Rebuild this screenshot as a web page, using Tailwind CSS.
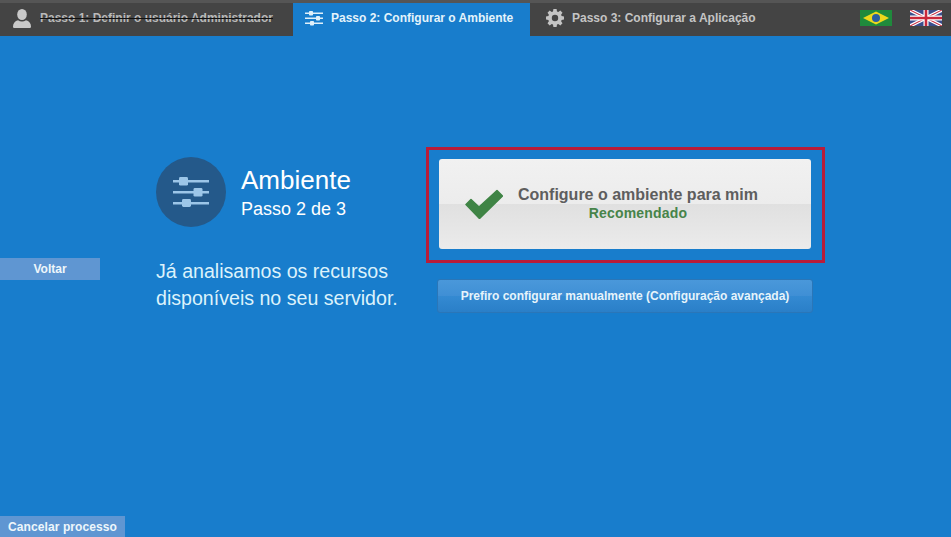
<!DOCTYPE html>
<html lang="pt-BR">
<head>
    <meta charset="UTF-8">
    <meta name="viewport" content="width=device-width, initial-scale=1.0">
    <title>Configurar o Ambiente</title>
    <script src="https://cdn.jsdelivr.net/npm/@tailwindcss/browser@4"></script>
</head>
<body class="bg-[#187dcc] font-['Liberation_Sans',Arial,sans-serif] overflow-hidden">
    <div class="flex flex-col w-[951px] h-[537px]">
        <!-- barra de passos -->
        <header class="flex h-9 shrink-0 bg-[#444444] border-t-[3px] border-[#555555]">
            <div class="flex items-center w-[293px] pl-[13px] pb-[3px] gap-[9px] text-xs font-bold text-[#b9b9b9]">
                <svg class="w-[18px] h-[19px]" viewBox="0 0 18 19" fill="#c9c9c9"><ellipse cx="9" cy="5.5" rx="4.8" ry="5.5"/><path d="M1 19c-.8 0-1-.6-1-1.4 0-3.6 2-5.6 5-6.4 2.4 1.6 5.6 1.6 8 0 3 .8 5 2.8 5 6.4 0 .8-.2 1.4-1 1.4z"/></svg>
                <span class="line-through decoration-[#111]">Passo 1: Definir o usuário Administrador</span>
            </div>
            <div class="flex items-center w-[237px] pl-[12px] pb-[3px] gap-[8px] bg-[#187dcc] text-xs font-bold text-[#e3f3fb]">
                <svg class="w-[18px] h-[15px]" viewBox="0 0 18 15" fill="#dff0fa"><path d="M0 1.5h18v1.6H0zM0 6.5h18v1.6H0zM0 11.5h18v1.6H0z"/><rect x="4" y="0" width="4" height="4.6" rx=".8"/><rect x="11" y="5" width="4" height="4.6" rx=".8"/><rect x="5" y="10" width="4" height="4.6" rx=".8"/></svg>
                <span>Passo 2: Configurar o Ambiente</span>
            </div>
            <div class="flex items-center flex-1 pl-[16px] pb-[3px] gap-[8px] text-xs font-bold text-[#c4c4c4]">
                <svg class="w-[18px] h-[18px]" viewBox="0 0 18 18" fill="#c4c4c4"><path fill-rule="evenodd" d="M7.4 0h3.2l.4 2.4 1.3.5 2-1.4 2.2 2.2-1.4 2 .5 1.3 2.4.4v3.2l-2.4.4-.5 1.3 1.4 2-2.2 2.2-2-1.4-1.3.5-.4 2.4H7.4L7 15.6l-1.3-.5-2 1.4-2.2-2.2 1.4-2-.5-1.3L0 10.6V7.4L2.4 7l.5-1.3-1.4-2 2.2-2.2 2 1.4L7 2.4zM9 5.8a3.2 3.2 0 1 0 0 6.4 3.2 3.2 0 0 0 0-6.4z"/></svg>
                <span>Passo 3: Configurar a Aplicação</span>
                <div class="flex items-center gap-[18px] ml-auto pr-[9px]">
                    <svg class="w-[32px] h-4" viewBox="0 0 32 16"><rect width="32" height="16" fill="#1f8a3c"/><path d="M16 1.5 29 8 16 14.5 3 8z" fill="#ecd81c"/><circle cx="16" cy="8" r="4" fill="#2a5da0"/></svg>
                    <svg class="w-[32px] h-4" viewBox="0 0 32 16"><rect width="32" height="16" fill="#3a4d8c"/><path d="M0 0 32 16M32 0 0 16" stroke="#fff" stroke-width="3.4"/><path d="M0 0 32 16M32 0 0 16" stroke="#c8283c" stroke-width="1.1"/><path d="M16 0v16M0 8h32" stroke="#fff" stroke-width="5"/><path d="M16 0v16M0 8h32" stroke="#c8283c" stroke-width="2.6"/></svg>
                </div>
            </div>
        </header>

        <main class="flex flex-1">
            <!-- coluna de acoes -->
            <div class="flex flex-col items-start w-[156px] pt-[222px]">
                <button class="w-[100px] h-[22px] bg-[#5f96d2] text-xs font-bold text-[#eef6fb]">Voltar</button>
                <button class="mt-auto w-[125px] h-[21px] bg-[#5f96d2] text-xs font-bold tracking-[.1px] text-[#eef6fb] pt-[1px]">Cancelar processo</button>
            </div>

            <section class="w-[270px] pt-[121px]">
                <div class="flex items-center gap-[15px]">
                    <div class="flex items-center justify-center w-[70px] h-[70px] rounded-full bg-[#24598a]">
                        <svg class="w-9 h-[30px]" viewBox="0 0 36 30" fill="#9cc6e8"><path d="M0 3h36v2.4H0zM0 14h36v2.4H0zM0 25h36v2.4H0z"/><rect x="6" y="0" width="9" height="8.6" rx="1.4"/><rect x="20.500" y="11" width="9" height="8.6" rx="1.4"/><rect x="9" y="22" width="9" height="8" rx="1.4"/></svg>
                    </div>
                    <div class="text-white pt-[3px]">
                        <h1 class="text-[26px] leading-[30px]">Ambiente</h1>
                        <p class="text-lg leading-[28px]">Passo 2 de 3</p>
                    </div>
                </div>
                <p class="mt-[31px] text-[19.6px] leading-[27px] text-[#dcf2fb]">Já analisamos os recursos<br>disponíveis no seu servidor.</p>
            </section>

            <section class="w-[399px] pt-[111px]">
                <div class="h-[116px] border-[3px] border-[#b91c3a] pl-[10px] pt-[9px]">
                    <button class="flex items-center w-[372px] h-[90px] rounded-[3px] bg-[linear-gradient(#f1f1f1_0%,#ececec_50%,#e0e0e0_50%,#ebebeb_100%)] pl-[26px]">
                        <svg class="w-[38px] h-[30px] shrink-0" viewBox="0 0 38 30" fill="#3f8445"><path d="M1 15.500 6 10.500 14 18 32 1.500 37.500 7 14.500 29.500z" stroke="#3f8445" stroke-linejoin="round" stroke-width="1.500"/></svg>
                        <span class="w-[273px] pb-[2px] pr-[3px] text-center">
                            <span class="block text-base leading-[20px] font-bold text-[#5e5e5e]">Configure o ambiente para mim</span>
                            <span class="block text-sm leading-[17px] tracking-[.2px] font-bold text-[#47844a]">Recomendado</span>
                        </span>
                    </button>
                </div>
                <button class="block ml-[11px] mt-[16px] w-[376px] h-[34px] rounded-[3px] border border-[#2a76b8] bg-[linear-gradient(#4a98da_0%,#3f8fd5_50%,#348ad2_50%,#2a7fc8_100%)] text-xs font-bold text-[#e6f4fb]">Prefiro configurar manualmente (Configuração avançada)</button>
            </section>
        </main>
    </div>
</body>
</html>
